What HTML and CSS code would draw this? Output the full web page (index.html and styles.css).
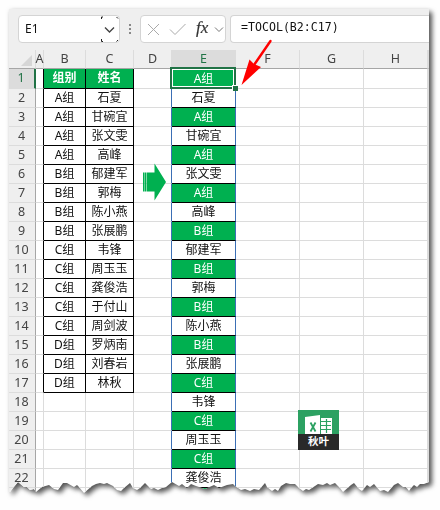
FILE: index.html
```html
<!DOCTYPE html>
<html lang="zh">

<head>
  <meta charset="UTF-8">
  <title>TOCOL</title>
  <link rel="stylesheet" href="styles.css">
</head>

<body>
  <div class="paper">
    <div class="sheet">
      <div class="toolbar">
        <div class="name-box">
          <span>E1</span>
          <span class="drop">
            <svg width="18" height="27" viewBox="0 0 18 27" fill="none">
              <path d="M0.500 3V1H2M15.500 1L17 2.500M0.500 23V25.500H2M15.500 25.500L17 24" stroke="#222" />
              <path d="M4 11.500l4.500 4.500L13 11.500" stroke="#444" stroke-width="1.400" />
            </svg>
          </span>
        </div>
        <div class="dots"><i></i><i></i><i></i></div>
        <div class="fx-box">
          <svg width="85" height="27" viewBox="0 0 85 27" fill="none">
            <path d="M7 8l11 11M18 8l-11 11" stroke="#aaa" />
            <path d="M29 13.500l5 5L44.500 8" stroke="#aaa" />
            <path d="M74 11.500l4 4 4-4" stroke="#777" />
          </svg>
          <span class="fx">fx</span>
        </div>
        <div class="formula">=TOCOL(B2:C17)</div>
      </div>
      <div class="grid" id="grid"></div>
    </div>
  </div>

  <svg class="pointer" width="36" height="50" viewBox="0 0 36 50">
    <path d="M29.500 2L13 26" stroke="#f00" stroke-width="2.400" stroke-linecap="round" />
    <path d="M0.500 46L8.500 20.500L13 25L20 28Z" fill="#f00" />
  </svg>

  <svg class="arrow" width="24" height="38" viewBox="0 0 24 38" fill="#00b050">
    <path d="M0 9.500h1.400v19H0zM1.800 9.500h1.700v19H1.800zM4 9.500H11.500V0.500L23 19L11.500 37.500V28.500H4z" />
  </svg>

  <div class="logo">
    <svg width="41" height="24" viewBox="0 0 41 24">
      <path d="M7 7l15-2v19H7z" fill="#fff" />
      <path d="M23 8h11v16H23z" fill="#fff" />
      <path d="M23 11.500h10M23 15.500h10M23 19.500h10M28.500 9v14" stroke="#2ca162" stroke-width="1.200" />
      <path d="M12.500 12.500l5 9M17.500 12.500l-5 9" stroke="#2ca162" stroke-width="1.800" />
    </svg>
    <span>秋叶</span>
  </div>

  <script src="script.js"></script>
</body>

</html>
```

FILE: styles.css
```css
body {
  margin: 0;
  position: relative;
  width: 440px;
  height: 510px;
  overflow: hidden;
  background: #fefefe;
  font-family: "Noto Sans", "Noto Sans CJK SC", sans-serif;
  font-size: 12px;
  color: #111;
}

.paper {
  padding: 9px 0 0 9px;
  filter: drop-shadow(3px 3px 2.5px rgba(0, 0, 0, 0.65)) drop-shadow(0 0 2px rgba(0, 0, 0, 0.08));
}

/* torn bottom edge */
.sheet {
  width: 420px;
  height: 486px;
  background: #fff;
  clip-path: polygon(0 0, 420px 0, 420px 473px, 415px 475px, 411px 475px, 408px 478px, 405px 476px, 402px 479px, 400px 482px, 397px 478px, 394px 478px, 389px 474px, 385px 476px, 379px 483px, 375px 481px, 371px 482px, 365px 475px, 361px 478px, 358px 476px, 353px 482px, 350px 480px, 345px 474px, 342px 476px, 334px 483px, 331px 479px, 326px 474px, 321px 476px, 318px 474px, 314px 476px, 309px 475px, 300px 481px, 297px 480px, 294px 482px, 290px 479px, 286px 475px, 281px 475px, 277px 474px, 272px 477px, 269px 482px, 266px 480px, 263px 482px, 258px 478px, 256px 474px, 250px 481px, 245px 480px, 241px 482px, 236px 480px, 232px 481px, 226px 477px, 224px 475px, 218px 476px, 210px 479px, 205px 476px, 196px 480px, 187px 477px, 182px 475px, 178px 479px, 173px 475px, 170px 477px, 163px 473px, 157px 478px, 153px 479px, 149px 481px, 145px 479px, 142px 480px, 136px 474px, 131px 479px, 128px 481px, 124px 479px, 121px 474px, 115px 479px, 112px 482px, 108px 481px, 104px 477px, 98px 474px, 95px 475px, 91px 474px, 87px 475px, 83px 477px, 75px 484px, 70px 478px, 68px 476px, 65px 478px, 58px 474px, 54px 474px, 49px 481px, 45px 480px, 40px 476px, 33px 478px, 27px 483px, 25px 480px, 21px 481px, 18px 478px, 15px 478px, 9px 473px, 4px 479px, 1px 483px, 0 483px);
}

.toolbar {
  display: flex;
  box-sizing: border-box;
  height: 41px;
  padding: 6px 0 0 9px;
  background: #efefef;
}

.name-box,
.fx-box,
.formula {
  box-sizing: border-box;
  height: 28px;
  background: #fff;
  border: 1px solid #d4d4d4;
  border-radius: 4px;
}

.name-box {
  display: flex;
  justify-content: space-between;
  width: 102px;
  padding-left: 6px;
  line-height: 25px;
}

.drop,
.drop svg {
  display: block;
  height: 27px;
}

.dots {
  display: flex;
  flex-direction: column;
  gap: 2px;
  width: 20px;
  padding: 9px 0 0 9px;
  box-sizing: border-box;
}

.dots i {
  width: 2px;
  height: 2px;
  background: #888;
}

.fx-box {
  position: relative;
  width: 86px;
}

.fx {
  position: absolute;
  left: 55px;
  top: 1px;
  color: #333;
  font: italic 17px/22px "Liberation Serif", serif;
  -webkit-text-stroke: 0.2px #333;
}

.formula {
  flex: 1;
  margin-left: 4px;
  padding-left: 10px;
  border-right: 0;
  border-radius: 4px 0 0 4px;
  font: 11.6px/23px "DejaVu Sans Mono", monospace;
}

.grid {
  display: grid;
  grid-template-columns: 27px 8px 42px 48px 38px 64px 64px 64px 64px 1px;
  grid-template-rows: 19px 20px;
  grid-auto-rows: 19px;
}

.cell {
  box-sizing: border-box;
  border-right: 1px solid #dcdcdc;
  border-bottom: 1px solid #dcdcdc;
  text-align: center;
  line-height: 18px;
  white-space: nowrap;
}

.col-head,
.row-head {
  background: #efefef;
  color: #444;
}

.col-head {
  border-bottom-color: #a6a6a6;
  line-height: 17px;
  font-size: 12.5px;
}

/* column A is narrower than its letter's line box */
.narrow {
  display: flex;
  justify-content: center;
}

.row-head {
  border-right-color: #a6a6a6;
  font-size: 12.5px;
  padding-right: 1px;
}

.corner {
  padding: 5px 3px 0 0;
  border-right-color: #dcdcdc;
}

.corner svg {
  display: block;
  margin-left: auto;
}

.active {
  background: #dcdcdc;
  color: #217346;
  border-bottom-color: #217346;
}

.row-head.active {
  border-right: 2px solid #217346;
  border-bottom-color: #dcdcdc;
}

.boxed {
  border-color: #000;
}

.green {
  background: #00b050;
  color: #fff;
}

.title {
  font-weight: bold;
}

.spill {
  border-right-color: #3b6fb5;
  border-bottom-color: #000;
}

.edge-left {
  border-right-color: #3b6fb5;
}

.edge-black {
  border-right-color: #000;
}

.selected {
  position: relative;
  line-height: 19px;
}

.selected::before {
  content: "";
  position: absolute;
  inset: -2px -1px -1px -2px;
  border: 2px solid #217346;
  box-shadow: inset 0 0 0 1px #fff;
}

.selected::after {
  content: "";
  position: absolute;
  right: -3px;
  bottom: -3px;
  width: 5px;
  height: 5px;
  background: #217346;
  border: 1px solid #fff;
  border-width: 1px 0 0 1px;
}

.pointer {
  position: absolute;
  left: 241px;
  top: 39px;
}

.arrow {
  position: absolute;
  left: 143px;
  top: 163px;
}

.logo {
  position: absolute;
  left: 298px;
  top: 410px;
  width: 41px;
  height: 40px;
  background: #2ca162;
}

.logo svg {
  display: block;
}

.logo span {
  display: block;
  height: 16px;
  background: #292929;
  color: #fff;
  font-size: 10.5px;
  font-weight: bold;
  line-height: 15px;
  text-align: center;
}
```

FILE: script.js
```js
const people = [
  ["A组", "石夏"],
  ["A组", "甘碗宜"],
  ["A组", "张文雯"],
  ["A组", "高峰"],
  ["B组", "郁建军"],
  ["B组", "郭梅"],
  ["B组", "陈小燕"],
  ["B组", "张展鹏"],
  ["C组", "韦锋"],
  ["C组", "周玉玉"],
  ["C组", "龚俊浩"],
  ["C组", "于付山"],
  ["C组", "周剑波"],
  ["D组", "罗炳南"],
  ["D组", "刘春岩"],
  ["D组", "林秋"],
];

const grid = document.getElementById("grid");
const spill = people.flat();

function addCell(text, classes) {
  const cell = document.createElement("div");
  cell.className = "cell " + (classes || "");
  cell.textContent = text;
  grid.appendChild(cell);
  return cell;
}

// Column headers
addCell("", "col-head corner").innerHTML =
  '<svg width="11" height="11"><path d="M11 0v11H0z" fill="#d6d6d6"/></svg>';
["A", "B", "C", "D", "E", "F", "G", "H", ""].forEach((name) => {
  const extra = name === "E" ? " active" : name === "A" ? " narrow" : "";
  addCell(name, "col-head" + extra);
});

// Rows 1 to 23
for (let row = 1; row <= 23; row++) {
  const inTable = row <= people.length + 1;
  const data = row === 1 ? ["组别", "姓名"] : people[row - 2] || ["", ""];
  const style = row === 1 ? "boxed green title" : inTable ? "boxed" : "";

  addCell(row, row === 1 ? "row-head active" : "row-head");
  addCell("", inTable ? "edge-black" : "");
  addCell(data[0], style);
  addCell(data[1], style);
  addCell("", "edge-left");
  addCell(
    spill[row - 1],
    "spill" + (row % 2 ? " green" : "") + (row === 1 ? " selected" : "")
  );
  for (let i = 0; i < 4; i++) {
    addCell("");
  }
}
```
